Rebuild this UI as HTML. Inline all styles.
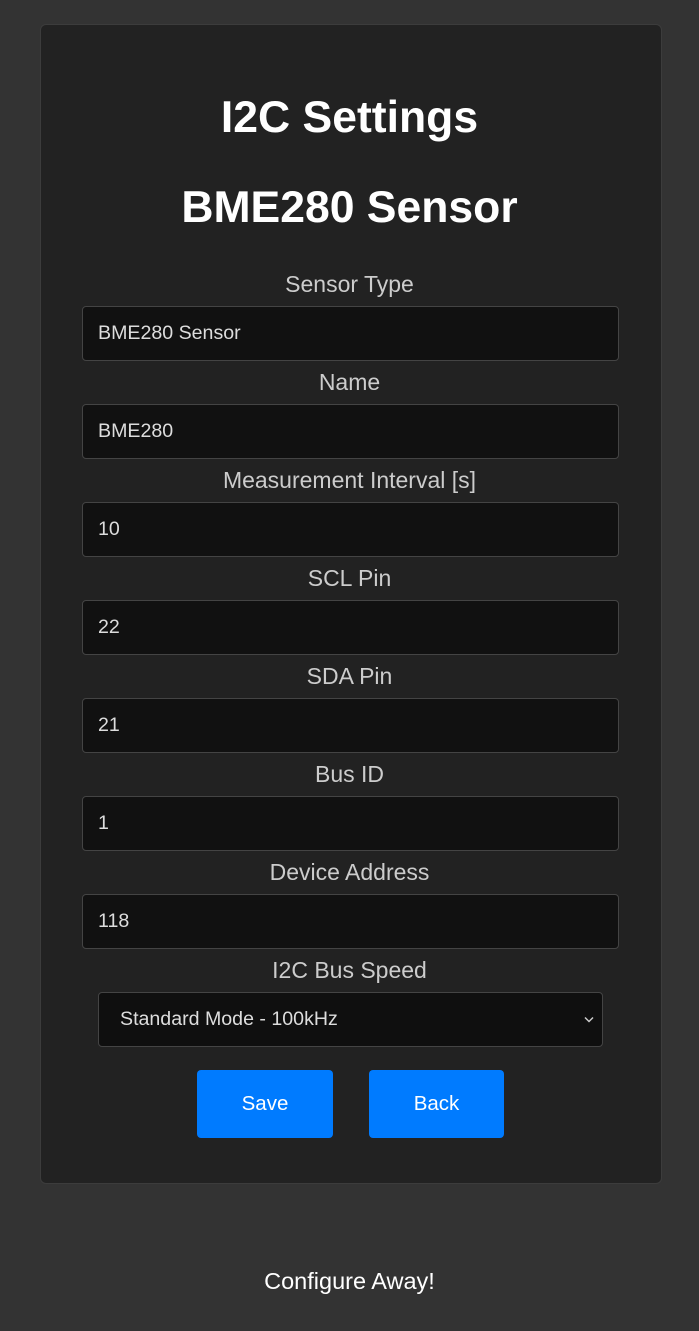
<!DOCTYPE html>
<html><head><style>
body{margin:0;background:#333;font-family:"Liberation Sans",Arial,sans-serif;width:699px;height:1331px;position:relative;overflow:hidden}
.card{position:absolute;left:40px;top:24px;width:622px;height:1160px;background:#222;border:1px solid #3c3c3c;border-radius:6px;box-sizing:border-box}
h1,h2{position:absolute;left:0;width:699px;text-align:center;color:#fff;font-weight:bold;margin:0;font-size:44.5px}
.lbl{position:absolute;left:0;width:699px;text-align:center;color:#ccc;font-size:23px;line-height:26px}
.in{position:absolute;left:82px;width:537px;height:55px;background:#111;border:1px solid #444;border-radius:4px;box-sizing:border-box;color:#ddd;font-size:19.6px;line-height:53px;padding-left:15px}
.sel{left:98px;width:505px;padding-left:21px;background:#0f0f0f}
.btn{position:absolute;top:1070px;height:68px;width:136px;background:#007bff;border-radius:4px;color:#fff;font-size:20.5px;text-align:center;line-height:68px}
.foot{position:absolute;top:1268px;left:0;width:699px;text-align:center;color:#fff;font-size:23.5px}
</style></head><body>
<div class="card"></div>
<h1 style="top:93px">I2C Settings</h1>
<h2 style="top:183px">BME280 Sensor</h2>
<div class="lbl" style="top:271px">Sensor Type</div>
<div class="in" style="top:306px">BME280 Sensor</div>
<div class="lbl" style="top:369px">Name</div>
<div class="in" style="top:404px">BME280</div>
<div class="lbl" style="top:467px">Measurement Interval [s]</div>
<div class="in" style="top:502px">10</div>
<div class="lbl" style="top:565px">SCL Pin</div>
<div class="in" style="top:600px">22</div>
<div class="lbl" style="top:663px">SDA Pin</div>
<div class="in" style="top:698px">21</div>
<div class="lbl" style="top:761px">Bus ID</div>
<div class="in" style="top:796px">1</div>
<div class="lbl" style="top:859px">Device Address</div>
<div class="in" style="top:894px">118</div>
<div class="lbl" style="top:957px">I2C Bus Speed</div>
<div class="in sel" style="top:992px">Standard Mode - 100kHz
<svg style="position:absolute;right:8px;top:23px" width="10" height="7" viewBox="0 0 10 7"><path d="M1 1.5L5 5.5L9 1.5" stroke="#ccc" stroke-width="1.5" fill="none"/></svg></div>
<div class="btn" style="left:197px">Save</div>
<div class="btn" style="left:369px;width:135px">Back</div>
<div class="foot">Configure Away!</div>
</body></html>
